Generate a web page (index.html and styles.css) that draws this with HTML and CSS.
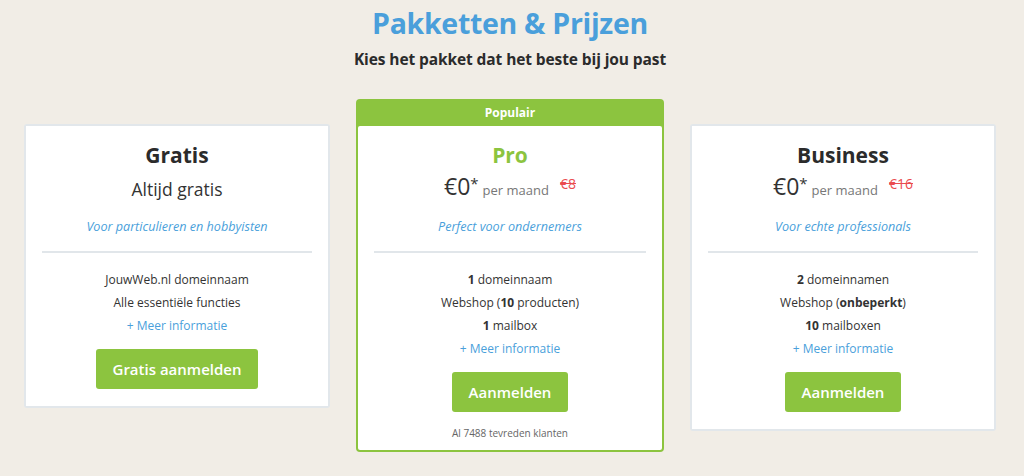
FILE: index.html
```html
<!DOCTYPE html>
<html lang="nl">
<head>
<meta charset="utf-8">
<title>Pakketten &amp; Prijzen</title>
<link rel="stylesheet" href="styles.css">
</head>
<body>
<div class="page">
  <header class="intro">
    <h1 class="intro-title">Pakketten &amp; Prijzen</h1>
    <p class="intro-sub">Kies het pakket dat het beste bij jou past</p>
  </header>
  <div class="plans">
    <section class="card card-side">
      <div class="card-body">
        <h2 class="plan-name">Gratis</h2>
        <div class="plan-price"><span class="plan-free">Altijd gratis</span></div>
        <p class="plan-tag">Voor particulieren en hobbyisten</p>
        <hr class="divider">
        <ul class="features">
          <li>JouwWeb.nl domeinnaam</li>
          <li>Alle essentiële functies</li>
          <li><a class="more" href="#">+ Meer informatie</a></li>
        </ul>
        <a class="btn" href="#">Gratis aanmelden</a>
      </div>
    </section>
    <section class="card card-featured">
      <div class="badge">Populair</div>
      <div class="card-body card-body-featured">
        <h2 class="plan-name plan-name-green">Pro</h2>
        <div class="plan-price"><span class="amount">€0<sup class="star">*</sup></span><span class="per">per maand</span><span class="old">€8</span></div>
        <p class="plan-tag">Perfect voor ondernemers</p>
        <hr class="divider">
        <ul class="features">
          <li><b>1</b> domeinnaam</li>
          <li>Webshop (<b>10</b> producten)</li>
          <li><b>1</b> mailbox</li>
          <li><a class="more" href="#">+ Meer informatie</a></li>
        </ul>
        <a class="btn" href="#">Aanmelden</a>
        <p class="customers">Al 7488 tevreden klanten</p>
      </div>
    </section>
    <section class="card card-side">
      <div class="card-body">
        <h2 class="plan-name">Business</h2>
        <div class="plan-price"><span class="amount">€0<sup class="star">*</sup></span><span class="per">per maand</span><span class="old">€16</span></div>
        <p class="plan-tag">Voor echte professionals</p>
        <hr class="divider">
        <ul class="features">
          <li><b>2</b> domeinnamen</li>
          <li>Webshop (<b>onbeperkt</b>)</li>
          <li><b>10</b> mailboxen</li>
          <li><a class="more" href="#">+ Meer informatie</a></li>
        </ul>
        <a class="btn" href="#">Aanmelden</a>
      </div>
    </section>
  </div>
</div>
</body>
</html>
```
FILE: styles.css
```css
* { box-sizing: border-box; }
html, body { margin: 0; padding: 0; }
body {
  background: #f1ede6;
  font-family: "Open Sans", "Liberation Sans", sans-serif;
  color: #333;
  width: 1024px;
  height: 476px;
  overflow: hidden;
}
.page { padding: 5px 28px 0 24px; }
.intro { text-align: center; }
.intro-title {
  margin: 0;
  font-size: 28.5px;
  line-height: 36px;
  font-weight: 700;
  color: #4a9fdb;
  letter-spacing: -0.3px;
}
.intro-sub {
  margin: 8px 0 0;
  font-size: 15.5px;
  line-height: 20px;
  font-weight: 700;
  color: #2b2b2b;
  letter-spacing: -0.1px;
}
.plans {
  display: flex;
  align-items: flex-start;
  gap: 26px;
  margin-top: 30px;
}
.card {
  width: 306px;
  flex: 0 0 auto;
  border-radius: 3px;
}
.card-side {
  margin-top: 25px;
  background: #fff;
  border: 2px solid #e2e7eb;
}
.card-featured {
  width: 308px;
  background: #8cc43f;
  padding: 0 2px 2px;
  border-radius: 4px;
}
.badge {
  height: 27px;
  line-height: 27px;
  text-align: center;
  color: #fff;
  font-size: 12px;
  font-weight: 700;
}
.card-body {
  background: #fff;
  padding: 14px 16px 17px;
  text-align: center;
}
.card-body-featured {
  border-radius: 2px;
  padding-bottom: 9px;
}
.plan-name {
  margin: 0;
  font-size: 21px;
  line-height: 30px;
  font-weight: 700;
  color: #2b2b2b;
}
.plan-name-green { color: #8cc43f; }
.plan-price {
  height: 32px;
  line-height: 32px;
  white-space: nowrap;
}
.plan-free {
  font-size: 17.5px;
  position: relative;
  top: 3px;
  color: #333;
}
.amount {
  font-size: 23px;
  color: #333;
}
.star {
  font-size: 15px;
  vertical-align: 6px;
  line-height: 0;
}
.per {
  font-size: 13px;
  color: #777;
  margin-left: 4px;
}
.old {
  font-size: 14px;
  color: #ea4b4f;
  text-decoration: line-through;
  vertical-align: 6px;
  margin-left: 11px;
  line-height: 0;
}
.plan-tag {
  margin: 16px 0 0;
  font-size: 12.6px;
  line-height: 18px;
  font-style: italic;
  color: #4a9fdb;
}
.divider {
  margin: 15px 0 0;
  border: 0;
  height: 2px;
  background: #e1e6ea;
}
.features {
  list-style: none;
  margin: 15px 0 0;
  padding: 0;
  font-size: 12px;
  line-height: 23px;
  color: #333;
}
.features b { font-weight: 700; }
.more {
  color: #4a9fdb;
  text-decoration: none;
}
.btn {
  display: inline-block;
  margin-top: 12px;
  height: 40px;
  line-height: 40px;
  padding: 0 17px;
  background: #8cc43f;
  color: #fff;
  font-size: 15px;
  font-weight: 600;
  text-decoration: none;
  border-radius: 3px;
}
.customers {
  margin: 13px 0 0;
  font-size: 10px;
  line-height: 16px;
  color: #666;
}
```
